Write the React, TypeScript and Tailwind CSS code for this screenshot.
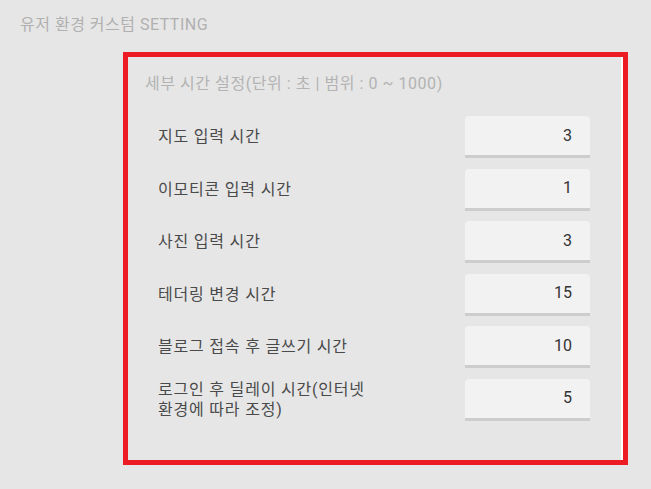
import React from "react";

const rows: { label: React.ReactNode; value: string }[] = [
  { label: "지도 입력 시간", value: "3" },
  { label: "이모티콘 입력 시간", value: "1" },
  { label: "사진 입력 시간", value: "3" },
  { label: "테더링 변경 시간", value: "15" },
  { label: "블로그 접속 후 글쓰기 시간", value: "10" },
  {
    label: (
      <>
        로그인 후 딜레이 시간(인터넷
        <br />
        환경에 따라 조정)
      </>
    ),
    value: "5",
  },
];

export default function App() {
  return (
    <div
      className="w-[651px] h-[489px] bg-[#e6e6e6] overflow-hidden"
      style={{ fontFamily: 'Roboto, "Noto Sans CJK KR", sans-serif' }}
    >
      <div className="pt-[15px] pl-[20px] text-[16px] leading-[20px] tracking-[0.5px] text-[#b0b0b0]">
        유저 환경 커스텀 SETTING
      </div>
      <div className="mt-[17px] ml-[123px] w-[505px] h-[413px] border-[5px] border-[#ed1c24]">
        <div className="h-full border-r-2 border-white">
          <div className="pt-[17px] pl-[17px] text-[16px] leading-[20px] tracking-[0.55px] text-[#b3b3b3]">
            세부 시간 설정(단위 : 초 | 범위 : 0 ~ 1000)
          </div>
          <div className="mt-[22px] pl-[30px] pr-[31px] flex flex-col gap-[10.6px]">
            {rows.map((r, i) => (
              <div key={i} className="flex items-center justify-between h-[42px]">
                <div className="text-[16px] leading-[20px] tracking-[0.8px] text-[#4a4a4a]">{r.label}</div>
                <div className="w-[125px] h-[42px] bg-[#f2f2f2] rounded-t-[4px] border-b-[3px] border-[#cdcdcd] flex items-center justify-end pr-[18px] text-[16px] text-[#333333]">
                  {r.value}
                </div>
              </div>
            ))}
          </div>
        </div>
      </div>
    </div>
  );
}
